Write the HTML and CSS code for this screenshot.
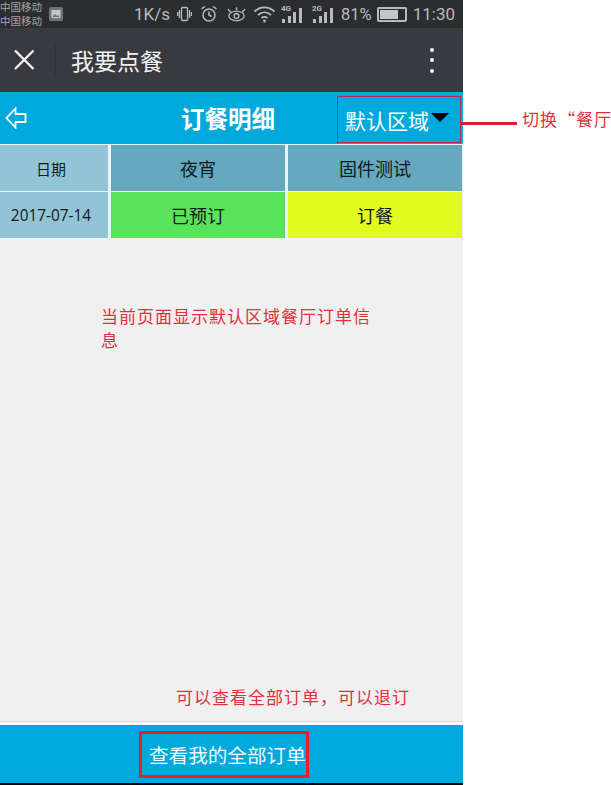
FILE: index.html
```html
<!DOCTYPE html>
<html lang="zh-CN">
<head>
<meta charset="utf-8">
<title>我要点餐</title>
<link rel="stylesheet" href="styles.css">
</head>
<body>
<div class="canvas">
  <main class="phone">
    <div class="status">
      <div class="carriers"><span>中国移动</span><span>中国移动</span></div>
      <svg class="pic-icon" width="14" height="14" viewBox="0 0 14 14"><rect width="14" height="14" rx="2" fill="#70747a"/><rect x="2.500" y="3" width="9" height="8" fill="#c5c7ca"/><path d="M3 10l3-3 2 2 1-1 2 2z" fill="#70747a"/></svg>
      <div class="status-right">
        <span class="speed">1K/s</span>
        <svg class="i-vib" width="15" height="16" viewBox="0 0 15 16" fill="none" stroke="#b8babc" stroke-width="1.300"><rect x="4.500" y="1.500" width="6" height="13" rx="1"/><path d="M2.500 4v8M.7 6v4M12.500 4v8M14.300 6v4"/></svg>
        <svg class="i-alarm" width="16" height="16" viewBox="1 1 16 16" fill="none" stroke="#b8babc" stroke-width="1.500"><circle cx="9" cy="10" r="6"/><path d="M9 6.500V10l2.500 1.500M1.500 4L5 1.500M16.500 4L13 1.500"/></svg>
        <svg class="i-eye" width="21" height="16" viewBox="0 0 22 16" fill="none" stroke="#b8babc" stroke-width="1.400"><path d="M2 3l3 3M20 3l-3 3M11 1v3"/><ellipse cx="11" cy="10" rx="8" ry="5"/><circle cx="11" cy="10" r="2.500"/></svg>
        <svg class="i-wifi" width="23" height="18" viewBox="0 0 23 18" fill="none" stroke="#b8babc" stroke-width="1.800"><path d="M1.500 6.500c6-5.500 14-5.500 20 0M5 10c4-3.500 9-3.500 13 0M8.500 13c2-1.500 4-1.500 6 0"/><circle cx="11.500" cy="16" r="1.400" fill="#b8babc" stroke="none"/></svg>
        <div class="signal"><b>4G</b><i class="s1"></i><i class="s2"></i><i class="s3"></i><i class="s4"></i></div>
        <div class="signal sig2"><b>2G</b><i class="s1"></i><i class="s2"></i><i class="s3"></i><i class="s4"></i></div>
        <span class="batt-text">81%</span>
        <div class="battery"><div class="battery-fill"></div></div>
        <span class="clock">11:30</span>
      </div>
    </div>

    <div class="titlebar">
      <svg class="close" width="22" height="22" viewBox="0 0 22 22" stroke="#f2f2f2" stroke-width="2.400"><path d="M2 1.500l18.500 18.500M20.500 1.500L2 20"/></svg>
      <div class="sep"></div>
      <div class="title">我要点餐</div>
      <div class="dots"><i></i><i></i><i></i></div>
    </div>

    <header class="head">
      <svg class="back" width="22" height="22" viewBox="0 0 22 22" fill="none" stroke="#fff" stroke-width="1.800"><path d="M10.500 1.500L1.500 11l9 9.500v-5.500h10v-8h-10z"/></svg>
      <h1 class="head-title">订餐明细</h1>
      <div class="area"><span>默认区域</span><i class="caret"></i></div>
    </header>

    <div class="grid">
      <div class="cell c-date">日期</div>
      <div class="cell c-head big">夜宵</div>
      <div class="cell c-head big">固件测试</div>
      <div class="cell c-date num">2017-07-14</div>
      <div class="cell c-green big">已预订</div>
      <div class="cell c-yellow big">订餐</div>
    </div>

    <div class="content"></div>

    <footer class="foot"><span class="foot-btn">查看我的全部订单</span></footer>
    <div class="navstrip"></div>
  </main>

  <div class="note note-main">当前页面显示默认区域餐厅订单信息</div>
  <div class="note note-all">可以查看全部订单，可以退订</div>
  <div class="leader"></div>
  <div class="note note-switch">切换“餐厅</div>
</div>
</body>
</html>
```
FILE: styles.css
```css
* { box-sizing: border-box; }
html, body { margin: 0; padding: 0; background: #fff; overflow: hidden; }
body { font-family: "Noto Sans CJK SC", "Noto Sans", sans-serif; }
.canvas { position: relative; width: 611px; height: 785px; overflow: hidden; }
.phone { width: 463px; height: 785px; display: flex; flex-direction: column; background: #f0f0f0; }

.status { height: 28px; flex: none; background: #2c2d30; display: flex; align-items: center; color: #b8babc; }
.carriers { display: flex; flex-direction: column; font-size: 10.500px; line-height: 14px; color: #a4a6a9; width: 49px; white-space: nowrap; }
.pic-icon { flex: none; }
.status-right { margin-left: auto; padding-right: 8px; display: flex; align-items: center; font-family: Roboto, sans-serif; }
.speed { font-size: 17px; }
.i-vib { margin-left: 7px; }
.i-alarm { margin-left: 9px; }
.i-eye { margin-left: 9px; }
.i-wifi { margin-left: 6px; }
.batt-text { font-size: 16.500px; margin-left: 8px; }
.clock { font-size: 17px; margin-left: 6px; }
.signal { position: relative; width: 21px; height: 18px; margin-left: 5px; display: flex; align-items: flex-end; gap: 2.500px; padding-left: 1px; }
.signal b { position: absolute; left: 0; top: -1px; font-size: 8px; line-height: 9px; }
.signal.sig2 { margin-left: 10px; }
.signal i { display: block; width: 3px; background: #b8babc; }
.s1 { height: 4px; } .s2 { height: 7px; } .s3 { height: 11px; } .s4 { height: 15px; }
.battery { width: 30px; height: 15px; border: 2px solid #b8babc; border-radius: 2px; padding: 1px; margin-left: 5px; }
.battery-fill { width: 78%; height: 100%; background: #c4c6c8; }

.titlebar { height: 64px; flex: none; background: #393a3f; display: flex; align-items: center; color: #f2f2f2; }
.close { margin-left: 13px; flex: none; }
.sep { width: 1px; height: 32px; background: #313236; margin-left: 20px; }
.title { font-size: 23px; margin-left: 15px; line-height: 32px; }
.dots { margin-left: auto; margin-right: 29px; display: flex; flex-direction: column; gap: 6.500px; }
.dots i { display: block; width: 4px; height: 4px; border-radius: 50%; background: #f2f2f2; }

.head { position: relative; height: 52px; flex: none; background: #00a9dc; display: flex; align-items: center; justify-content: center; color: #fff; }
.back { position: absolute; left: 5px; top: 15px; }
.head-title { margin: 0 7px 0 0; font-size: 23.500px; font-weight: 700; line-height: 32px; }
.area { position: absolute; left: 337px; top: 4px; width: 124px; height: 47px; border: 1px solid #b02a55; display: flex; align-items: center; padding-left: 7px; font-size: 21px; }
.caret { width: 0; height: 0; margin: -5px 0 0 2px; border-left: 9.500px solid transparent; border-right: 9.500px solid transparent; border-top: 9px solid #000; }

.grid { flex: none; width: 462px; margin-top: 1px; display: grid; grid-template-columns: 108px 174px 174px; grid-template-rows: 46px 46px; gap: 1px 3px; background: #e7f5f8; }
.cell { display: flex; align-items: center; justify-content: center; font-size: 15px; color: #10191d; }
.big { font-size: 18px; }
.num { font-size: 15.400px; font-family: "Open Sans", sans-serif; }
.c-date { background: #93c4d6; padding-right: 6px; }
.c-head { background: #66a8bd; }
.c-green { background: #5ae25a; }
.c-yellow { background: #e1fb1f; }

.content { flex: 1; min-height: 0; }
.foot { height: 58px; flex: none; background: #00a9dc; display: flex; align-items: center; justify-content: center; color: #f4fbfd; box-shadow: 0 -3px 0 #fafafa, 0 -4px 0 #d8d8d8; }
.foot-btn { width: 170px; height: 47px; margin-left: -15px; padding-left: 7px; border: 3px solid #ee1c25; font-size: 19.600px; line-height: 41px; white-space: nowrap; }
.navstrip { height: 2px; flex: none; background: #000; }

.note { position: absolute; color: #e0303c; font-size: 17px; line-height: 24px; letter-spacing: 1px; }
.note-main { left: 101px; top: 304px; width: 276px; }
.note-all { left: 176px; top: 685px; white-space: nowrap; }
.note-switch { left: 522px; top: 107px; white-space: nowrap; }
.leader { position: absolute; left: 460px; top: 122px; width: 57px; height: 3px; background: #d81e30; }
```
